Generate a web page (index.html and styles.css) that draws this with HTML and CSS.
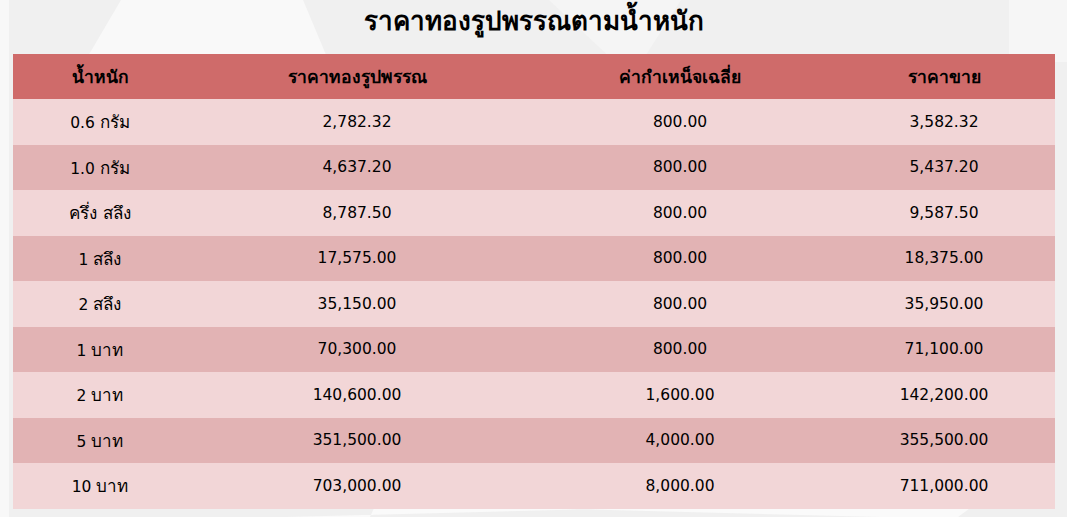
FILE: index.html
```html
<!DOCTYPE html>
<html lang="th">
<head>
<meta charset="utf-8">
<title>ราคาทองรูปพรรณตามน้ำหนัก</title>
<link rel="stylesheet" href="styles.css">
</head>
<body>
<div class="page">
  <div class="deco deco-a"></div>
  <div class="deco deco-b"></div>
  <div class="deco deco-c"></div>
  <div class="deco deco-d"></div>
  <main class="content">
    <h1 class="title">ราคาทองรูปพรรณตามน้ำหนัก</h1>
    <table class="price-table">
      <colgroup>
        <col class="c1"><col class="c2"><col class="c3"><col class="c4">
      </colgroup>
      <thead>
        <tr><th>น้ำหนัก</th><th>ราคาทองรูปพรรณ</th><th>ค่ากำเหน็จเฉลี่ย</th><th>ราคาขาย</th></tr>
      </thead>
      <tbody>
        <tr><td>0.6 <span class="unit">กรัม</span></td><td>2,782.32</td><td>800.00</td><td>3,582.32</td></tr>
        <tr><td>1.0 <span class="unit">กรัม</span></td><td>4,637.20</td><td>800.00</td><td>5,437.20</td></tr>
        <tr><td><span class="unit">ครึ่ง สลึง</span></td><td>8,787.50</td><td>800.00</td><td>9,587.50</td></tr>
        <tr><td>1 <span class="unit">สลึง</span></td><td>17,575.00</td><td>800.00</td><td>18,375.00</td></tr>
        <tr><td>2 <span class="unit">สลึง</span></td><td>35,150.00</td><td>800.00</td><td>35,950.00</td></tr>
        <tr><td>1 <span class="unit">บาท</span></td><td>70,300.00</td><td>800.00</td><td>71,100.00</td></tr>
        <tr><td>2 <span class="unit">บาท</span></td><td>140,600.00</td><td>1,600.00</td><td>142,200.00</td></tr>
        <tr><td>5 <span class="unit">บาท</span></td><td>351,500.00</td><td>4,000.00</td><td>355,500.00</td></tr>
        <tr><td>10 <span class="unit">บาท</span></td><td>703,000.00</td><td>8,000.00</td><td>711,000.00</td></tr>
      </tbody>
    </table>
  </main>
</div>
</body>
</html>
```
FILE: styles.css
```css
html, body {
  margin: 0;
  padding: 0;
}
body {
  background: #f8f8f8;
  font-family: Tahoma, "DejaVu Sans", "Noto Sans", sans-serif;
  color: #000;
}
.page {
  position: relative;
  height: 517px;
  margin-left: 9px;
  background: #f0f0f0;
  overflow: hidden;
}
.deco {
  position: absolute;
  top: 0;
  height: 517px;
  background: #f9f9f9;
}
.deco-a {
  left: 60px;
  width: 260px;
  clip-path: polygon(20% 0, 90% 0, 100% 12%, 6% 12%);
}
.deco-b {
  left: 540px;
  width: 220px;
  background: #f5f5f5;
  clip-path: polygon(0 0, 60% 0, 42% 12%, 30% 12%);
}
.deco-c {
  left: 1000px;
  width: 60px;
  background: #f6f6f6;
  clip-path: polygon(0 0, 100% 0, 100% 12%, 0 12%);
}
.deco-d {
  left: 270px;
  width: 700px;
  background: #fafafa;
  clip-path: polygon(0 97%, 14% 97%, 13% 100%, 1% 100%, 87% 97%, 100% 97%, 97% 100%, 86% 100%);
}
.content {
  position: relative;
  padding: 0 12px 0 4px;
}
.title {
  margin: 0;
  height: 54px;
  line-height: 42px;
  text-align: center;
  font-size: 26px;
  font-weight: bold;
}
.price-table {
  width: 1042px;
  border-collapse: collapse;
  table-layout: fixed;
  font-size: 15.5px;
}
.c1 { width: 174px; }
.c2 { width: 340px; }
.c3 { width: 306px; }
.c4 { width: 222px; }
.price-table th {
  height: 45px;
  padding: 0;
  background: #cf6b6a;
  font-size: 17.5px;
  font-weight: bold;
  text-align: center;
}
.price-table td {
  height: 45.5px;
  padding: 0;
  text-align: center;
}
.unit {
  font-size: 17px;
}
.price-table tbody tr:nth-child(odd) td {
  background: #f2d6d7;
}
.price-table tbody tr:nth-child(even) td {
  background: #e2b3b4;
}
```
